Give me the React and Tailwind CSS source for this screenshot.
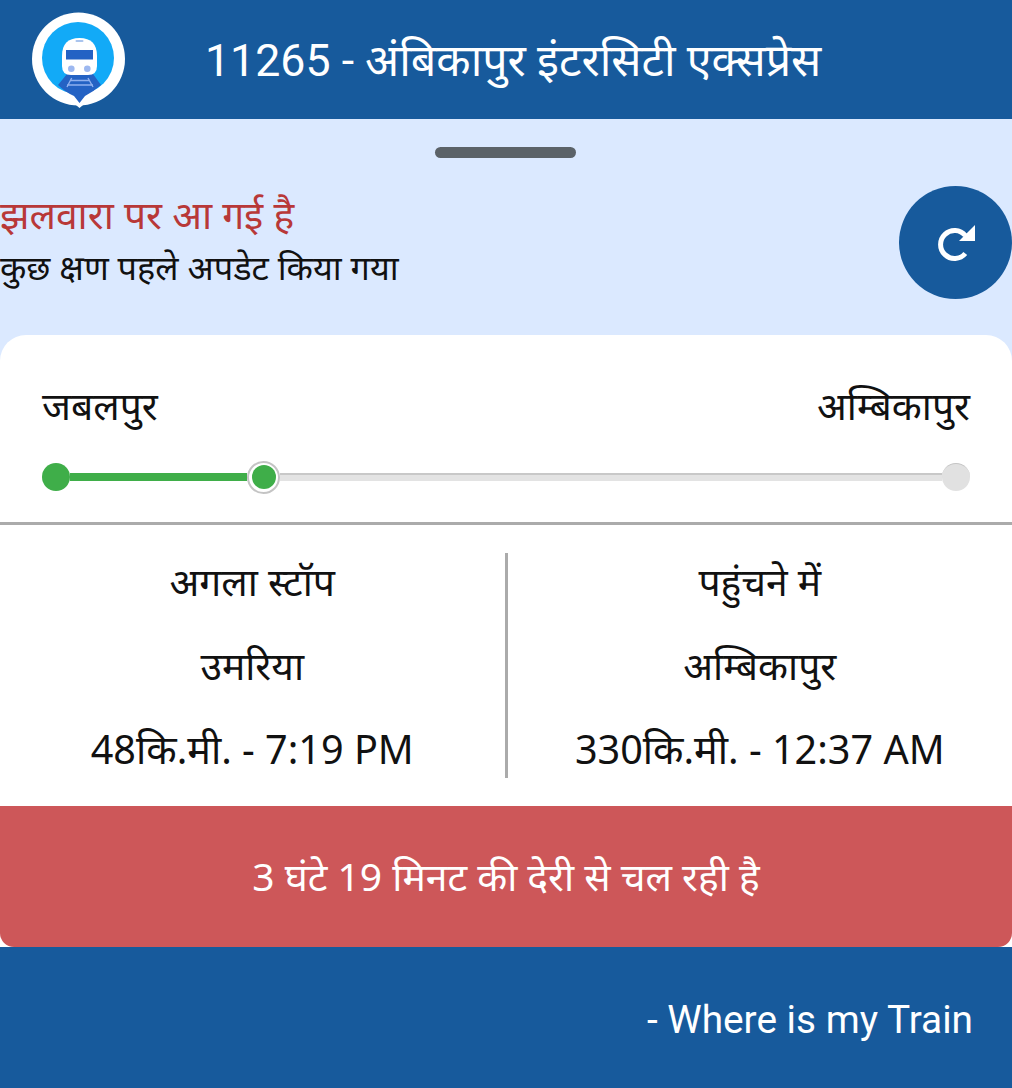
import React from 'react';

const Logo = () => (
    <svg width="100" height="100" viewBox="0 0 100 100" className="shrink-0">
        <circle cx="48.5" cy="49" r="46.5" fill="#ffffff" />
        <path d="M40 90 L49.5 98 L59 90 Z" fill="#ffffff" />
        <circle cx="48" cy="48" r="36" fill="#12aaf7" />
        <path d="M37 64 L63 64 L71 75 Q63 82 55 86 L49.5 93 L44 86 Q35 82 28 75 Z" fill="#2462c4" />
        <path d="M40 70.5 H60 M37 75 H63 M41.7 68 L37 77 M58 68 L63 77" stroke="#8fb0ee" strokeWidth="1.4" fill="none" />
        <path d="M32 46 Q32 28 49.5 28 Q67 28 67 46 V56 Q67 65 58 65 H41 Q32 65 32 56 Z" fill="#ffffff" />
        <rect x="36" y="40" width="27" height="9.5" fill="#2462c4" />
        <rect x="45.5" y="30" width="8" height="2" rx="1" fill="#a9c4ee" />
        <circle cx="41.3" cy="58.7" r="3.3" fill="#9db8f0" />
        <circle cx="57.3" cy="58.7" r="3.3" fill="#9db8f0" />
    </svg>
);

const RefreshIcon = () => (
    <svg width="50" height="50" viewBox="0 0 50 50">
        <path d="M34.3 35.5 A14 14 0 1 1 34.3 17.5" fill="none" stroke="#ffffff" strokeWidth="5" />
        <path d="M28 23 H44 V7 Z" fill="#ffffff" />
    </svg>
);

const devanagari = "font-['Noto_Sans','Liberation_Sans',sans-serif]";

const InfoColumn = ({ title, place, detail }) => (
    <div className="flex-1 flex flex-col items-center pt-[4px] text-[39px] leading-[48px] text-[#111111] gap-[36px]">
        <span>{title}</span>
        <span>{place}</span>
        <span className="text-[39.6px]">{detail}</span>
    </div>
);

const App = () => {
    return (
        <div className={`w-[1012px] h-[1088px] overflow-hidden bg-[#175a9c] ${devanagari}`}>
            <header className="h-[119px] bg-[#175a9c] flex items-center pl-[30px]">
                <Logo />
                <h1 className="ml-[75px] pt-[4px] text-[44.7px] text-white font-['Roboto','Noto_Sans',sans-serif] font-normal whitespace-nowrap">
                    11265 - अंबिकापुर इंटरसिटी एक्सप्रेस
                </h1>
            </header>

            <div className="bg-[#dbe9ff]">
                <div className="w-[141px] h-[11px] rounded-full bg-[#5b6268] ml-[435px] translate-y-[28px]" />
                <div className="flex items-start justify-between pt-[56px] pb-[36px]">
                    <div className="flex flex-col pt-[4px]">
                        <span className="text-[39px] leading-[48px] text-[#b83838]">झलवारा पर आ गई है</span>
                        <span className="text-[34.3px] leading-[46px] mt-[6px] text-[#111111]">कुछ क्षण पहले अपडेट किया गया</span>
                    </div>
                    <button className="w-[113px] h-[113px] rounded-full bg-[#175a9c] flex items-center justify-center">
                        <RefreshIcon />
                    </button>
                </div>

                <main className="bg-white rounded-t-[26px] overflow-hidden">
                    <section className="h-[190px] px-[42px] border-b-[3px] border-[#ababab]">
                        <div className="flex justify-between pt-[44px] text-[39px] leading-[52px] text-[#111111]">
                            <span>जबलपुर</span>
                            <span>अम्बिकापुर</span>
                        </div>
                        <div className="flex items-center mt-[30px] h-[32px]">
                            <div className="w-[28px] h-[28px] rounded-full bg-[#3fae49] shrink-0" />
                            <div className="w-[177px] h-[8px] bg-[#3fae49] shrink-0" />
                            <div className="w-[33px] h-[33px] rounded-full bg-white border-2 border-[#c4c4c4] flex items-center justify-center shrink-0">
                                <div className="w-[24px] h-[24px] rounded-full bg-[#3fae49]" />
                            </div>
                            <div className="flex-1 h-[8px] bg-[#e3e3e3] border-t-2 border-[#c8c8c8]" />
                            <div className="w-[28px] h-[28px] rounded-full bg-[#e1e1e1] border-t border-[#c4c4c4] shrink-0" />
                        </div>
                    </section>

                    <section className="h-[281px] flex py-[28px]">
                        <InfoColumn title="अगला स्टॉप" place="उमरिया" detail="48कि.मी. - 7:19 PM" />
                        <div className="w-[3px] bg-[#ababab] shrink-0" />
                        <InfoColumn title="पहुंचने में" place="अम्बिकापुर" detail="330कि.मी. - 12:37 AM" />
                    </section>
                </main>
            </div>

            <div className="bg-white">
                <section className="h-[141px] bg-[#cd5759] rounded-b-[14px] flex items-center justify-center text-[39px] text-white">
                    3 घंटे 19 मिनट की देरी से चल रही है
                </section>
            </div>

            <footer className="h-[141px] bg-[#175a9c] flex items-center justify-end pr-[39px] pt-[6px] text-[38.8px] text-white font-['Roboto','Noto_Sans',sans-serif]">
                - Where is my Train
            </footer>
        </div>
    );
};

export default App;
